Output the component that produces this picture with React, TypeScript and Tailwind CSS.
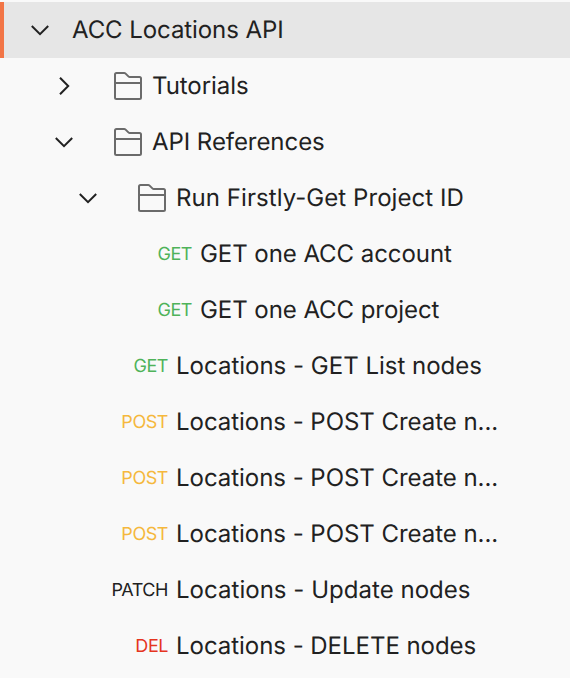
type Method = "GET" | "POST" | "PATCH" | "DEL";

const methodColor: Record<Method, string> = {
  GET: "text-[#4fb35a]",
  POST: "text-[#f5b83d]",
  PATCH: "text-[#212121]",
  DEL: "text-[#e5351f]",
};

function Chevron({ open }: { open: boolean }) {
  return (
    <svg className="size-6 shrink-0" viewBox="0 0 24 24" fill="none" stroke="#212121" strokeWidth="2" aria-hidden="true">
      <path d={open ? "M3.8 8 12 16.2 20.2 8" : "M8 3.8 16.2 12 8 20.2"} />
    </svg>
  );
}

function FolderIcon() {
  return (
    <svg className="size-7 shrink-0" viewBox="0 0 28 28" fill="none" stroke="#6b6b6b" strokeWidth="2" aria-hidden="true">
      <path d="M1 2.5A1.5 1.5 0 0 1 2.5 1h7.7a2 2 0 0 1 1.4.6l2.8 2.8a2 2 0 0 0 1.4.6H25.5A1.5 1.5 0 0 1 27 6.5v19a1.5 1.5 0 0 1-1.5 1.5h-23A1.5 1.5 0 0 1 1 25.5zM1 11h26" />
    </svg>
  );
}

function Folder({ name, open, indent, tracking = "tracking-[-0.06px]" }: { name: string; open: boolean; indent: string; tracking?: string }) {
  return (
    <div className={`flex h-14 items-center ${indent}`}>
      <Chevron open={open} />
      <div className="ml-[38px] mr-2.5">
        <FolderIcon />
      </div>
      <span className={`whitespace-nowrap ${tracking}`}>{name}</span>
    </div>
  );
}

function Request({ method, name, nested, tracking = "tracking-[-0.04px]" }: { method: Method; name: string; nested?: boolean; tracking?: string }) {
  return (
    <div className="flex h-14 items-center">
      <span className={`shrink-0 pt-0.5 text-right text-[18px] font-[385] tracking-[-0.45px] ${nested ? "w-48" : "w-42"} ${methodColor[method]}`}>
        {method}
      </span>
      <span className={`ml-2 whitespace-nowrap ${tracking}`}>{name}</span>
    </div>
  );
}

export default function App() {
  return (
    <div className="h-[678px] w-full overflow-hidden bg-[#f9f9f9] pt-0.5 font-['Inter',sans-serif] text-2xl text-[#212121] [font-feature-settings:'calt'_0] [text-rendering:geometricPrecision]">
      <div className="flex h-14 items-center border-l-4 border-[#f27546] bg-[#e6e6e6] pl-6">
        <Chevron open />
        <span className="ml-5 tracking-[-0.08px]">ACC Locations API</span>
      </div>
      <Folder name="Tutorials" open={false} indent="pl-[52px]" />
      <Folder name="API References" open indent="pl-[52px]" />
      <Folder name="Run Firstly-Get Project ID" open indent="pl-[76px]" tracking="tracking-[0.06px]" />
      <Request method="GET" name="GET one ACC account" nested tracking="tracking-[-0.06px]" />
      <Request method="GET" name="GET one ACC project" nested tracking="tracking-[-0.06px]" />
      <Request method="GET" name="Locations - GET List nodes" tracking="tracking-normal" />
      <Request method="POST" name="Locations - POST Create n..." />
      <Request method="POST" name="Locations - POST Create n..." />
      <Request method="POST" name="Locations - POST Create n..." />
      <Request method="PATCH" name="Locations - Update nodes" tracking="tracking-[0.03px]" />
      <Request method="DEL" name="Locations - DELETE nodes" />
    </div>
  );
}
